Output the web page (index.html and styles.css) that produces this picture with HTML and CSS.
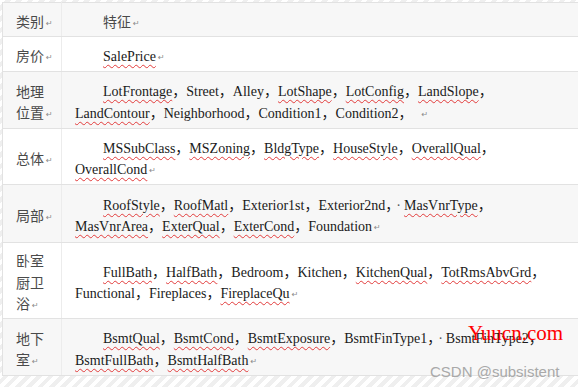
FILE: index.html
```html
<!DOCTYPE html>
<html>
<head>
<meta charset="utf-8">
<link rel="stylesheet" href="styles.css">
</head>
<body>
<div class="page">
<table class="grid">
<colgroup><col class="c1"><col class="c2"></colgroup>
<tr class="gray r1"><td class="cat">类别<span class="pm">↵</span></td><td class="feat"><span class="zh">特征</span><span class="pm">↵</span></td></tr>
<tr class="r2"><td class="cat">房价<span class="pm">↵</span></td><td class="feat"><span class="sp">SalePrice</span><span class="pm">↵</span></td></tr>
<tr class="gray r3"><td class="cat">地理<br>位置<span class="pm">↵</span></td><td class="feat"><span class="sp">LotFrontage</span>，Street，Alley，<span class="sp">LotShape</span>，<span class="sp">LotConfig</span>，<span class="sp">LandSlope</span>，<br><span class="sp">LandContour</span>，Neighborhood，Condition1，Condition2，&nbsp; <span class="pm">↵</span></td></tr>
<tr class="r4"><td class="cat">总体<span class="pm">↵</span></td><td class="feat"><span class="sp">MSSubClass</span>，<span class="sp">MSZoning</span>，<span class="sp">BldgType</span>，<span class="sp">HouseStyle</span>，<span class="sp">OverallQual</span>，<br><span class="sp">OverallCond</span><span class="pm">↵</span></td></tr>
<tr class="gray r5"><td class="cat">局部<span class="pm">↵</span></td><td class="feat"><span class="sp">RoofStyle</span>，<span class="sp">RoofMatl</span>，Exterior1st，Exterior2nd，<span class="dot">·</span><span class="sp">MasVnrType</span>，<br><span class="sp">MasVnrArea</span>，<span class="sp">ExterQual</span>，<span class="sp">ExterCond</span>，Foundation<span class="pm">↵</span></td></tr>
<tr class="r6"><td class="cat">卧室<br>厨卫<br>浴<span class="pm">↵</span></td><td class="feat"><span class="sp">FullBath</span>，<span class="sp">HalfBath</span>，Bedroom，Kitchen，<span class="sp">KitchenQual</span>，<span class="sp">TotRmsAbvGrd</span>，<br>Functional，Fireplaces，<span class="sp">FireplaceQu</span><span class="pm">↵</span></td></tr>
<tr class="gray r7"><td class="cat">地下<br>室<span class="pm">↵</span></td><td class="feat"><span class="sp">BsmtQual</span>，<span class="sp">BsmtCond</span>，<span class="sp">BsmtExposure</span>，BsmtFinType1，<span class="dot">·</span>BsmtFinType2，<br><span class="sp">BsmtFullBath</span>，<span class="sp">BsmtHalfBath</span><span class="pm">↵</span></td></tr>
</table>
<div class="wm-red">Yuucn.com</div>
<div class="wm-csdn">CSDN @subsistent</div>
</div>
</body>
</html>
```
FILE: styles.css
```css
html, body {
  margin: 0;
  padding: 0;
}
body {
  width: 578px;
  height: 387px;
  overflow: hidden;
  background: repeating-linear-gradient(135deg, #ffffff 0px, #ffffff 4px, #efefef 4px, #efefef 8px);
}
.page {
  position: relative;
  width: 578px;
  height: 387px;
  padding: 2px 0 0 2px;
  box-sizing: border-box;
}
.grid {
  border-collapse: collapse;
  table-layout: fixed;
  width: 576px;
  background: #ffffff;
  border: 1px solid #e2e2e2;
}
.c1 { width: 59px; }
.c2 { width: 517px; }
.grid td {
  border-top: 1px solid #e2e2e2;
  border-bottom: 1px solid #e2e2e2;
  padding: 6px 0 0 13px;
  vertical-align: middle;
  line-height: 21.5px;
  white-space: nowrap;
  overflow: hidden;
}
.grid td.cat {
  border-right: 1px solid #ececec;
  font-family: "Noto Sans CJK SC", sans-serif;
  font-size: 14px;
  color: #4a4a4a;
}
.zh {
  font-family: "Noto Sans CJK SC", sans-serif;
  color: #4a4a4a;
}
.grid td.feat {
  font-family: "Liberation Serif", "Noto Sans CJK SC", serif;
  font-size: 14px;
  color: #1a1a1a;
  text-indent: 28px;
}
.gray { background: #f7f7f7; }
.r1 { height: 34px; }
.r2 { height: 35px; }
.r3 { height: 57px; }
.r4 { height: 56px; }
.r5 { height: 58px; }
.r6 { height: 76px; }
.r7 { height: 57px; }
.sp {
  text-decoration: underline wavy #e23b3b;
  text-decoration-thickness: 1px;
  text-underline-offset: 3px;
}
.pm {
  font-family: "DejaVu Sans", sans-serif;
  font-size: 8px;
  color: #8a8a8a;
  margin-left: 2px;
  vertical-align: 1px;
  text-indent: 0;
}
.dot {
  color: #555;
  margin-left: 4px;
  margin-right: 3px;
}
.wm-red {
  position: absolute;
  left: 468px;
  top: 320px;
  font-family: "Liberation Serif", serif;
  font-size: 21px;
  color: #ff0000;
  line-height: 26px;
}
.wm-csdn {
  position: absolute;
  left: 430px;
  top: 362px;
  font-family: "Liberation Sans", sans-serif;
  font-size: 15px;
  color: #a9a9a9;
  line-height: 20px;
}
```
